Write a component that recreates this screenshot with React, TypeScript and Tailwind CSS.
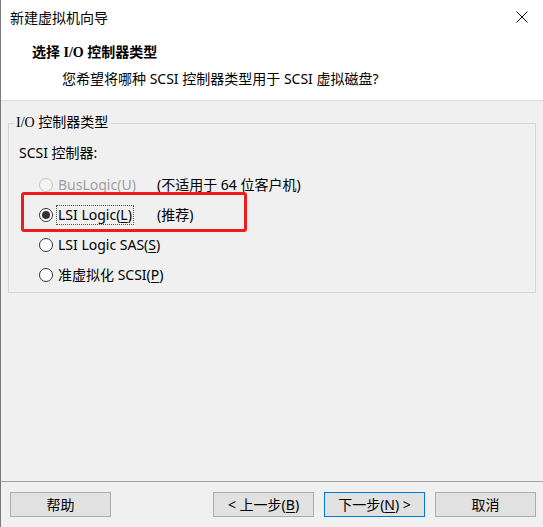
import React from "react";

const sans = "font-['Noto_Sans','Noto_Sans_CJK_SC',sans-serif]";
const serifMix = "font-['Liberation_Serif','Noto_Sans_CJK_SC',serif]";

type RadioProps = {
    label: React.ReactNode,
    note?: string,
    checked?: boolean,
    disabled?: boolean,
    focused?: boolean,
}

const Radio = ({ label, note, checked, disabled, focused }: RadioProps) => {
    return (
        <div className="h-[30px] flex items-center">
            <span
                className={`ml-[30px] w-[14px] h-[14px] rounded-full border flex items-center justify-center ${disabled ? "border-[#c4c4c4] bg-[#f4f4f4]" : "border-[#333333] bg-white"}`}
            >
                {checked && <span className="w-[8px] h-[8px] rounded-full bg-[#333333]"></span>}
            </span>
            <span
                className={`ml-[4px] px-[1px] leading-[18px] ${focused ? "outline outline-1 outline-dotted outline-[#555]" : ""} ${disabled ? "text-[#a0a0a0]" : "text-black"}`}
            >
                {label}
            </span>
            {note && <span className="absolute left-[148px] leading-[18px]">{note}</span>}
        </div>
    )
}

const Key = ({ k }: { k: string }) => <span className="underline underline-offset-2">{k}</span>

const Button = ({ children, primary }: { children: React.ReactNode, primary?: boolean }) => (
    <button
        className={`w-[101px] h-[25px] bg-[#e1e1e1] border text-[14px] leading-[18px] text-black ${primary ? "border-[#0078d7]" : "border-[#adadad]"}`}
    >
        {children}
    </button>
)

const App = function () {
    return (
        <div className={`w-[543px] h-[527px] bg-[#f0f0f0] border-l border-[#7a7a7a] flex flex-col text-[14px] text-black ${sans}`}>
            <header className="h-[101px] bg-white border-b border-[#dcdcdc] shrink-0">
                <div className="h-[36px] pl-[9px] pr-[15px] flex items-center justify-between">
                    <span className="leading-[18px]">新建虚拟机向导</span>
                    <svg width="12" height="12" viewBox="0 0 12 12" className="mt-[-2px]">
                        <path d="M0.5 0.5 L11.5 11.5 M11.5 0.5 L0.5 11.5" stroke="#111" strokeWidth="1" />
                    </svg>
                </div>
                <div className={`pl-[31px] mt-[7px] leading-[20px] font-bold ${serifMix}`}>选择 I/O 控制器类型</div>
                <div className="pl-[61px] mt-[6px] leading-[20px]">您希望将哪种 SCSI 控制器类型用于 SCSI 虚拟磁盘?</div>
            </header>

            <main className="flex-1 px-[7px] pt-[22px]">
                <div className="relative h-[170px] border border-[#d5d5d5]">
                    <span className={`absolute -top-[10px] left-[5px] px-[2px] bg-[#f0f0f0] leading-[18px] ${serifMix}`}>
                        I/O 控制器类型
                    </span>
                    <div className="pl-[10px] pt-[19px] leading-[20px]">SCSI 控制器:</div>
                    <div className="mt-[7px] flex flex-col">
                        <Radio label={<>BusLogic(<Key k="U" />)</>} note="(不适用于 64 位客户机)" disabled />
                        <Radio label={<>LSI Logic(<Key k="L" />)</>} note="(推荐)" checked focused />
                        <Radio label={<>LSI Logic SAS(<Key k="S" />)</>} />
                        <Radio label={<>准虚拟化 SCSI(<Key k="P" />)</>} />
                    </div>
                    <div className="absolute left-[12px] top-[68px] w-[226px] h-[40px] border-[3px] border-[#f01c1c] rounded-[3px]"></div>
                </div>
            </main>

            <footer className="h-[46px] border-t border-[#a0a0a0] shrink-0 flex items-start pt-[10px] pl-[9px] pr-[7px]">
                <Button>帮助</Button>
                <div className="flex-grow"></div>
                <div className="flex gap-[10px]">
                    <Button>&lt; 上一步(<Key k="B" />)</Button>
                    <Button primary>下一步(<Key k="N" />) &gt;</Button>
                    <Button>取消</Button>
                </div>
            </footer>
        </div>
    )
}

export default App;
